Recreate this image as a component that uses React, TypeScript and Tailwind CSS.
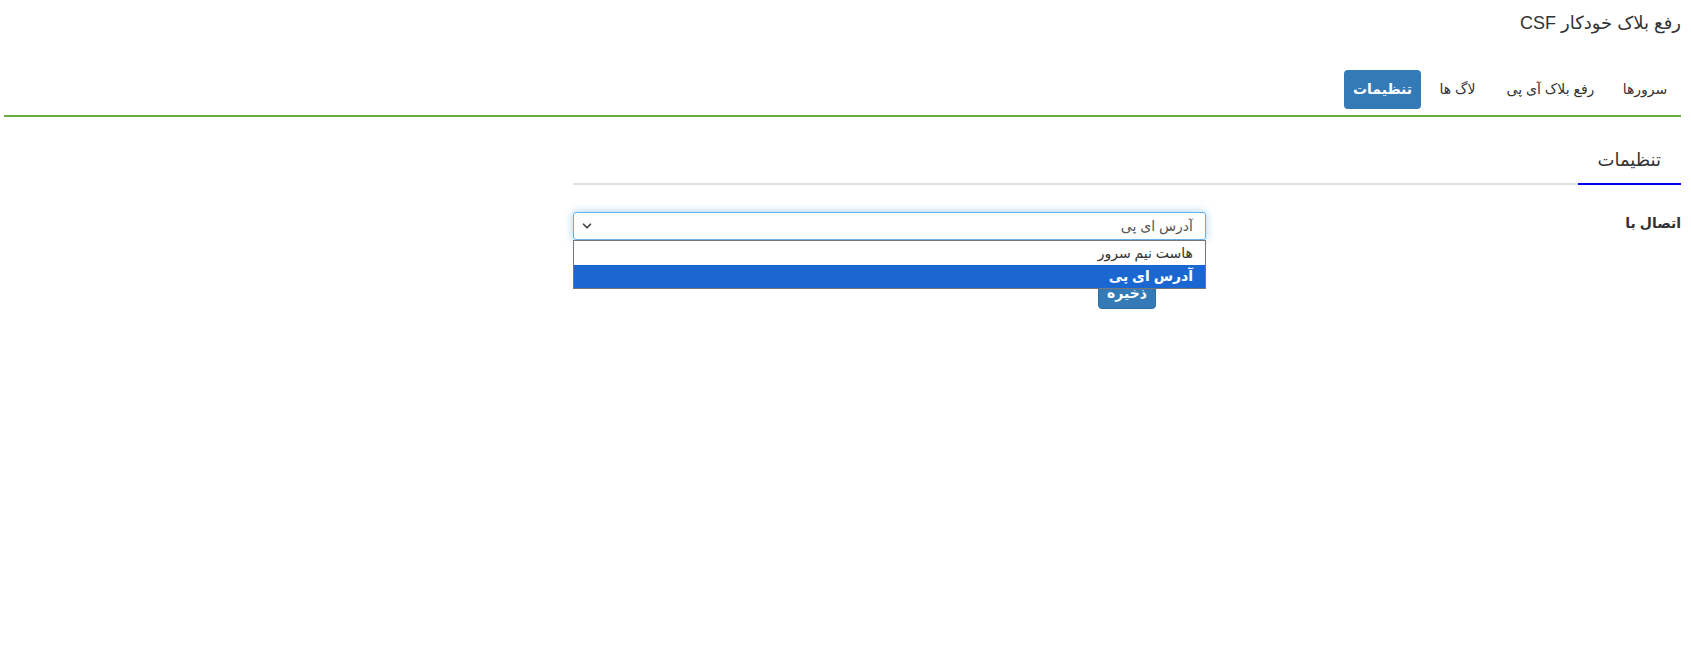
import { ChevronDown } from "lucide-react";

type Tab = { label: string; width: string; active?: boolean };

const tabs: Tab[] = [
  { label: "سرورها", width: "w-[72px]" },
  { label: "رفع بلاک آی پی", width: "w-[113px]" },
  { label: "لاگ ها", width: "w-[69px]" },
  { label: "تنظیمات", width: "w-[77px]", active: true },
];

const options = ["هاست نیم سرور", "آدرس ای پی"];

function Tabs() {
  return (
    <ul className="mt-[36px] flex gap-[2px] border-b-2 border-[#6aad40] pb-[6px]">
      {tabs.map((tab) => (
        <li
          key={tab.label}
          className={
            tab.active
              ? `${tab.width} rounded-[4px] bg-[#337ab7] py-[10px] text-center text-[14px] leading-[19px] font-bold text-white`
              : `${tab.width} rounded-[4px] py-[10px] text-center text-[14px] leading-[19px] text-[#333]`
          }
        >
          {tab.label}
        </li>
      ))}
    </ul>
  );
}

function SettingsForm() {
  return (
    <div className="mr-0 ml-auto w-[1108px]">
      <div className="mt-[30px] flex border-b-2 border-[#dee2e6]">
        <h4 className="-mb-[2px] border-b-2 border-[#0000ee] px-[20px] pb-[10px] text-[18px] leading-[26px] text-[#333]">
          تنظیمات
        </h4>
      </div>

      <div className="mt-[27px] flex items-start justify-between">
        <label className="pt-[1px] text-[14px] leading-[20px] font-bold text-[#333]">
          اتصال با
        </label>
        <div className="relative w-[633px]">
          <div className="flex h-[28px] items-center justify-between rounded-[3px] border border-[#66afe9] pr-[12px] pl-[6px] text-[14px] text-[#555] shadow-[0_0_8px_rgba(102,175,233,0.6)]">
            <span>آدرس ای پی</span>
            <ChevronDown className="h-[14px] w-[14px] text-[#444]" strokeWidth={3} />
          </div>
          {/* native select popup, opened */}
          <ul className="absolute top-full right-0 left-0 z-10 border border-[#767676] bg-white text-[14px]">
            {options.map((opt, i) => (
              <li
                key={opt}
                className={
                  i === 1
                    ? "h-[23px] bg-[#1a67d2] pr-[12px] leading-[23px] font-bold text-white"
                    : "h-[24px] pr-[12px] leading-[24px] text-[#333]"
                }
              >
                {opt}
              </li>
            ))}
          </ul>
        </div>
      </div>

      <div className="mt-[37px] flex pr-[525px]">
        <button className="h-[32px] w-[58px] rounded-[4px] border border-[#2e6da4] bg-[#337ab7] text-[14px] font-bold text-white">
          ذخیره
        </button>
      </div>
    </div>
  );
}

export default function App() {
  return (
    <div
      dir="rtl"
      className="h-[656px] w-full bg-white pr-[10px] pl-[4px] font-['Liberation_Sans','DejaVu_Sans',sans-serif]"
    >
      <h3 className="pt-[12px] text-[18px] leading-[22px] text-[#333]">
        رفع بلاک خودکار CSF
      </h3>
      <Tabs />
      <SettingsForm />
    </div>
  );
}
